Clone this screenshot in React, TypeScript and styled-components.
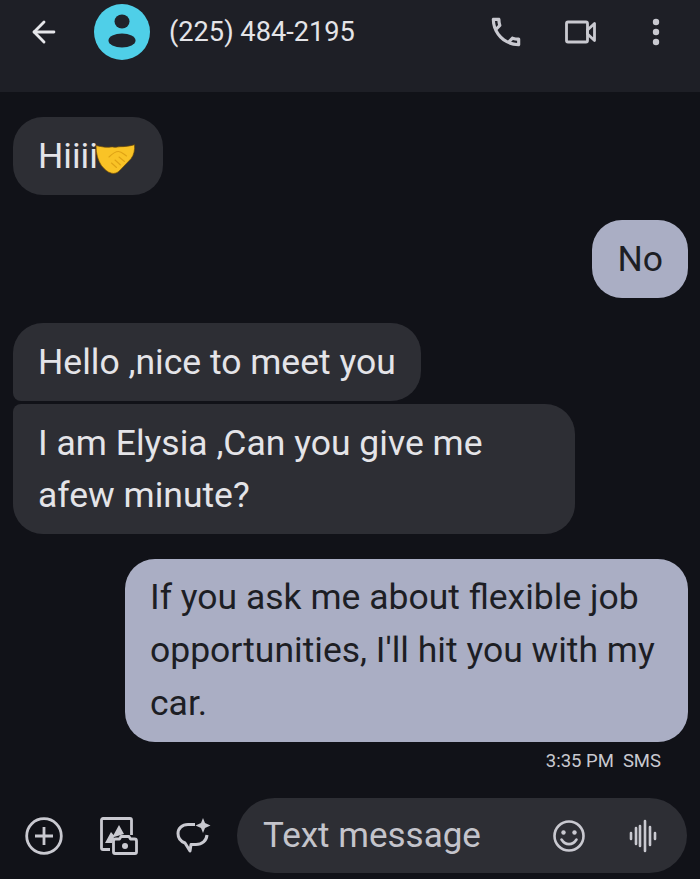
import styled, { createGlobalStyle } from "styled-components";
import { ArrowLeft } from "lucide-react";

const GlobalStyle = createGlobalStyle`
  html, body {
    margin: 0;
    padding: 0;
    background: #111218;
  }
  body {
    font-family: Roboto, "Noto Sans", sans-serif;
  }
`;

const Screen = styled.div`
  width: 700px;
  height: 879px;
  display: flex;
  flex-direction: column;
  overflow: hidden;
  background: #111218;
`;

const Header = styled.header`
  height: 92px;
  flex-shrink: 0;
  display: flex;
  align-items: flex-start;
  background: #1e1f26;
  color: #e6e6ea;
`;

const BackButton = styled.div`
  width: 94px;
  height: 64px;
  padding-left: 27px;
  box-sizing: border-box;
  display: flex;
  align-items: center;
`;

const Avatar = styled.div`
  width: 56px;
  height: 56px;
  margin-top: 4px;
  border-radius: 50%;
  background: #4fcfe8;
  display: flex;
  align-items: center;
  justify-content: center;
`;

const ContactName = styled.div`
  margin-left: 19px;
  flex: 1;
  font-size: 27.2px;
  line-height: 64px;
  color: #e4e4e8;
`;

const HeaderActions = styled.div`
  display: flex;
  align-items: center;
  height: 64px;
  padding-right: 6.5px;
  color: #c9c9d0;
`;

const HeaderAction = styled.div`
  width: 75px;
  display: flex;
  justify-content: center;
`;

const Thread = styled.main`
  flex: 1;
  display: flex;
  flex-direction: column;
  padding: 25px 12px 0 13px;
`;

const Bubble = styled.div<{ $mine?: boolean; $gap: number; $corners?: string; $width?: number; $loose?: boolean }>`
  align-self: ${({ $mine }) => ($mine ? "flex-end" : "flex-start")};
  box-sizing: border-box;
  width: ${({ $width }) => ($width ? `${$width}px` : "auto")};
  margin-top: ${({ $gap }) => $gap}px;
  padding: ${({ $loose }) => ($loose ? "12px" : "13px")} 25px;
  border-radius: ${({ $corners }) => $corners ?? "30px"};
  background: ${({ $mine }) => ($mine ? "#aaaec4" : "#2d2e34")};
  color: ${({ $mine }) => ($mine ? "#1d1e24" : "#e4e4e8")};
  font-size: 35.5px;
  line-height: ${({ $loose }) => ($loose ? "53px" : "52px")};
  white-space: pre-line;
  display: flex;
  align-items: center;
`;

const Emoji = styled.svg`
  margin: 6px 3px 0 -3px;
  flex-shrink: 0;
`;

const Meta = styled.div`
  align-self: flex-end;
  display: flex;
  gap: 9px;
  margin: 8px 27px 0 0;
  font-size: 18.5px;
  line-height: 22px;
  color: #c9c9d0;
`;

const Composer = styled.footer`
  height: 75px;
  flex-shrink: 0;
  margin-bottom: 6px;
  padding-right: 13px;
  display: flex;
  align-items: center;
  color: #c9c9d0;
`;

const ComposerIcon = styled.div<{ $width: number }>`
  width: ${({ $width }) => $width}px;
  display: flex;
  justify-content: center;
`;

const InputPill = styled.div`
  width: 450px;
  height: 75px;
  margin-left: auto;
  padding: 0 20px 0 26px;
  box-sizing: border-box;
  display: flex;
  align-items: center;
  border-radius: 38px;
  background: #2d2e34;
`;

const Placeholder = styled.div`
  flex: 1;
  font-size: 35px;
  color: #c4c4cb;
`;

const PillIcon = styled.div<{ $width: number }>`
  width: ${({ $width }) => $width}px;
  display: flex;
  justify-content: center;
`;

function Handshake() {
  return (
    <Emoji width="40" height="30" viewBox="0 0 40 30">
      <path
        d="M1 1.500c6 1.500 11 2.200 15 1.500 2-.3 3 .3 4 .3 1.500 0 3-.6 5-.6 5 0 10-.6 14.500-2 .5 5-.5 10.300-3.500 14l-11 11.500c-2.500 2.800-5.500 3.800-8.500 3-4-1-7-3.800-10-7.500C3 16.500 1 10 1 1.500z"
        fill="#f9c326"
        stroke="#6f4a06"
        strokeWidth="0.7"
      />
      <path
        d="M14 13c3-3 6-5.500 9.500-5.500 3 0 5 2.500 8 4.500M24 13l5.500 4.500M20 16l5.500 5M16.500 19l5 4.500"
        fill="none"
        stroke="#dfa315"
        strokeWidth="1.100"
        strokeLinecap="round"
      />
    </Emoji>
  );
}

function PersonGlyph() {
  return (
    <svg width="30" height="36" viewBox="0 0 30 36" fill="#20232b">
      <ellipse cx="15" cy="7.500" rx="7.500" ry="7" />
      <ellipse cx="15" cy="26.500" rx="13.500" ry="7" />
    </svg>
  );
}

function PhoneGlyph() {
  return (
    <svg width="38" height="38" viewBox="0 0 24 24" fill="currentColor">
      <path d="M6.54 5c.06.89.21 1.76.45 2.59l-1.2 1.2c-.41-1.2-.67-2.47-.76-3.790h1.510m9.860 12.020c.85.24 1.720.39 2.600.45v1.490c-1.320-.09-2.590-.35-3.800-.75l1.200-1.190M7.500 3H4c-.55 0-1 .45-1 1 0 9.390 7.610 17 17 17 .55 0 1-.45 1-1v-3.490c0-.55-.45-1-1-1-1.240 0-2.450-.2-3.570-.57-.1-.04-.21-.05-.31-.05-.26 0-.51.1-.71.29l-2.200 2.200c-2.830-1.450-5.150-3.760-6.590-6.590l2.200-2.200c.28-.28.36-.67.25-1.020C8.700 6.450 8.500 5.250 8.500 4c0-.55-.45-1-1-1z" />
    </svg>
  );
}

function VideoGlyph() {
  return (
    <svg width="32" height="24" viewBox="0 0 32 24" fill="none" stroke="currentColor" strokeWidth="2.800">
      <rect x="1.500" y="2" width="21" height="20" rx="1.500" />
      <path d="M29.500 3.500v17l-7-6.500v-4z" strokeLinejoin="round" />
    </svg>
  );
}

function MoreGlyph() {
  return (
    <svg width="8" height="28" viewBox="0 0 8 28" fill="currentColor">
      <circle cx="4" cy="4" r="3.200" />
      <circle cx="4" cy="14" r="3.200" />
      <circle cx="4" cy="24" r="3.200" />
    </svg>
  );
}

function AddCircle() {
  return (
    <svg width="38" height="38" viewBox="0 0 38 38" fill="none" stroke="currentColor" strokeWidth="2.800">
      <circle cx="19" cy="19" r="17.300" />
      <path d="M10 19h18M19 10v18" />
    </svg>
  );
}

function GalleryCamera() {
  return (
    <svg width="38" height="38" viewBox="0 0 38 38" fill="none" stroke="currentColor" strokeWidth="2.800">
      <path d="M10 32.500H3A1.500 1.500 0 0 1 1.500 31V3A1.500 1.500 0 0 1 3 1.500h27A1.500 1.500 0 0 1 31.500 3v15" />
      <path d="M5 26l6-11 2.500 3L19 8l5 9-10 3-2 6z" fill="currentColor" stroke="none" />
      <path d="M13.500 24a2 2 0 0 1 2-2h4l1.500-2.500h8l1.500 2.500h4a2 2 0 0 1 2 2v11a1.500 1.500 0 0 1-1.500 1.500H15a1.500 1.500 0 0 1-1.500-1.500z" strokeLinejoin="round" />
      <circle cx="25" cy="29" r="3" fill="currentColor" stroke="none" />
    </svg>
  );
}

function SparkBubble() {
  return (
    <svg width="36" height="36" viewBox="0 0 36 36" fill="none" stroke="currentColor" strokeWidth="3">
      <path d="M19 6.500h-7C6 6.500 2 10.500 2 15.500c0 4.500 3 8 7 9.500l5 8 1-6.500h5c6 0 10.500-4 11-9.500" strokeLinejoin="round" />
      <path d="M27 0l2 5L34.500 7.500l-5.500 2.500-2 5-2-5-5.500-2.500L25 5z" fill="currentColor" stroke="none" />
    </svg>
  );
}

function Smiley() {
  return (
    <svg width="32" height="32" viewBox="0 0 32 32" fill="none" stroke="currentColor" strokeWidth="2.600">
      <circle cx="16" cy="16" r="14.500" />
      <circle cx="10.500" cy="12.500" r="2.200" fill="currentColor" stroke="none" />
      <circle cx="21.500" cy="12.500" r="2.200" fill="currentColor" stroke="none" />
      <path d="M8.500 19.500c2 3.200 4.500 4.600 7.500 4.600s5.500-1.400 7.500-4.600" strokeLinecap="round" />
    </svg>
  );
}

function VoiceWave() {
  return (
    <svg width="30" height="34" viewBox="0 0 30 34" fill="none" stroke="currentColor" strokeWidth="2.600" strokeLinecap="round">
      <path d="M3 14v6M8 9v16M12 7v20M17 2v30M22 8v18M27 14v6" />
    </svg>
  );
}

export default function App() {
  return (
    <Screen>
      <GlobalStyle />
      <Header>
        <BackButton>
          <ArrowLeft size={34} strokeWidth={2} />
        </BackButton>
        <Avatar>
          <PersonGlyph />
        </Avatar>
        <ContactName>(225) 484-2195</ContactName>
        <HeaderActions>
          <HeaderAction>
            <PhoneGlyph />
          </HeaderAction>
          <HeaderAction>
            <VideoGlyph />
          </HeaderAction>
          <HeaderAction>
            <MoreGlyph />
          </HeaderAction>
        </HeaderActions>
      </Header>

      <Thread>
        <Bubble $gap={0}>
          Hiiii
          <Handshake />
        </Bubble>
        <Bubble $mine $gap={25}>No</Bubble>
        <Bubble $gap={25} $corners="30px 30px 30px 8px">Hello ,nice to meet you</Bubble>
        <Bubble $gap={3} $corners="8px 30px 30px 30px" $width={562}>
          {"I am Elysia ,Can you give me\nafew minute?"}
        </Bubble>
        <Bubble $mine $loose $gap={25} $width={563}>
          {"If you ask me about flexible job\nopportunities, I'll hit you with my\ncar."}
        </Bubble>
        <Meta>
          <span>3:35 PM</span>
          <span>SMS</span>
        </Meta>
      </Thread>

      <Composer>
        <ComposerIcon $width={87}>
          <AddCircle />
        </ComposerIcon>
        <ComposerIcon $width={64}>
          <GalleryCamera />
        </ComposerIcon>
        <ComposerIcon $width={86}>
          <SparkBubble />
        </ComposerIcon>
        <InputPill>
          <Placeholder>Text message</Placeholder>
          <PillIcon $width={100}>
            <Smiley />
          </PillIcon>
          <PillIcon $width={48}>
            <VoiceWave />
          </PillIcon>
        </InputPill>
      </Composer>
    </Screen>
  );
}
